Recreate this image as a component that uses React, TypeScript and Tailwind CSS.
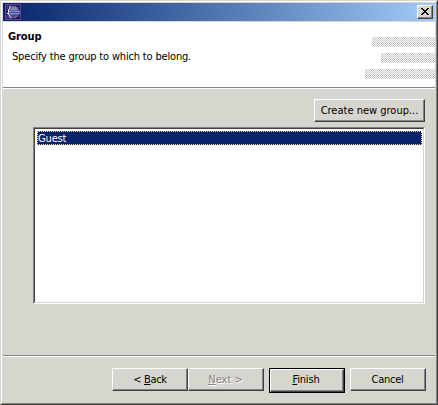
import type { ReactNode } from "react";

const raised =
  "border border-t-white border-l-white border-r-[#404040] border-b-[#404040] shadow-[inset_-1px_-1px_0_#848284]";

function Button({ children, className = "" }: { children: ReactNode; className?: string }) {
  return (
    <button
      type="button"
      className={`flex h-[23px] shrink-0 items-center justify-center whitespace-nowrap bg-[#d6d6ce] ${raised} ${className}`}
    >
      {children}
    </button>
  );
}

function Rule() {
  return <div className="h-[2px] shrink-0 border-t border-b border-t-[#848284] border-b-white" />;
}

const dither =
  "h-[10px] bg-[repeating-conic-gradient(#c6c3c6_0_25%,#ffffff_0_50%)] bg-[length:2px_2px]";

function EclipseIcon() {
  return (
    <svg width="16" height="16" viewBox="0 0 16 16" shapeRendering="crispEdges">
      <rect width="16" height="16" fill="#5c4798" />
      <rect x="1" y="1" width="14" height="14" fill="#2a1a58" />
      <path d="M1 1h4v2H3v3H1zM1 11h3v2h3v2H1z" fill="#472f80" />
      <path d="M6 2h5v1h2v2h1v6h-1v2h-2v1H6v-1H5v-2H4V5h1V3h1z" fill="#67659a" />
      <path d="M7 3h4v1h1v2H6V4h1z" fill="#8583a8" />
      <path d="M6 11h6v1h-2v1H7v-1H6z" fill="#47417c" />
      <path d="M5 2h1v1H5v2H4v2H3V5h1V3h1zM3 9h1v2h1v2h1v1H5v-1H4v-2H3z" fill="#d5d2f2" />
      <path d="M2 9h1v1H2zM3 7h1v2H3z" fill="#ffffff" />
      <path d="M4 7h11v1H4zM4 9h11v1H4z" fill="#7590e2" />
      <path d="M4 8h11v1H4z" fill="#4b4398" />
    </svg>
  );
}

export default function App() {
  return (
    <div className="h-[405px] w-[438px] overflow-hidden border border-t-[#d6d6ce] border-l-[#d6d6ce] border-r-[#404040] border-b-[#404040] bg-[#d6d6ce] font-['DejaVu_Sans_Condensed','DejaVu_Sans',sans-serif] text-[11px] leading-[13px] text-black [font-stretch:condensed]">
      <div className="flex h-full flex-col border border-t-white border-l-white border-r-[#848284] border-b-[#848284] px-px pt-px">
        <header className="flex h-[18px] shrink-0 items-center justify-between bg-linear-to-r from-[#08246b] to-[#a5cbf7] pr-[2px] pl-[2px]">
          <EclipseIcon />
          <button type="button" aria-label="Close" className={`flex h-[14px] w-4 items-center justify-center bg-[#d6d6ce] ${raised}`}>
            <svg width="8" height="7" viewBox="0 0 8 7" shapeRendering="crispEdges" className="mr-px mb-px">
              <path
                d="M0 0h2v1H0zM6 0h2v1H6zM1 1h2v1H1zM5 1h2v1H5zM2 2h4v1H2zM3 3h2v1H3zM2 4h4v1H2zM1 5h2v1H1zM5 5h2v1H5zM0 6h2v1H0zM6 6h2v1H6z"
                fill="#000"
              />
            </svg>
          </button>
        </header>
        <section className="mt-px flex h-[65px] shrink-0 justify-between bg-white">
          <div className="pt-[8px] pl-[5px]">
            <h1 className="font-bold tracking-[-0.1px]">Group</h1>
            <p className="mt-[7px] pl-[4px] tracking-[-0.17px]">Specify the group to which to belong.</p>
          </div>
          <div className="flex flex-col items-end gap-[6px] pt-[15px]">
            <div className={`w-[63px] ${dither}`} />
            <div className={`w-[54px] ${dither}`} />
            <div className={`w-[70px] ${dither}`} />
          </div>
        </section>
        <Rule />
        <main className="flex h-[266px] shrink-0 flex-col pt-[10px] pr-[10px] pl-[30px]">
          <Button className="w-[111px] self-end">Create new group...</Button>
          <div className="mt-[5px] h-[177px] border border-t-[#848284] border-l-[#848284] border-r-white border-b-white">
            <div className="h-full border border-t-[#404040] border-l-[#404040] border-r-[#d6d6ce] border-b-[#d6d6ce] bg-white pt-[2px] pr-px pl-[2px]">
              <div className="h-[14px] border border-dotted border-[#f7db94] bg-[#08246b] leading-[14px] tracking-[-0.15px] text-white">
                Guest
              </div>
            </div>
          </div>
        </main>
        <Rule />
        <footer className="flex items-start justify-end pt-[11px] pr-[9px]">
          <Button className="w-[76px] pb-px tracking-[-0.35px]">
            <span>&lt; <u>B</u>ack</span>
          </Button>
          <Button className="w-[76px] pr-px pb-px text-[#848284] [text-shadow:1px_1px_0_#fff]">
            <span><u>N</u>ext &gt;</span>
          </Button>
          <div className="mr-[5px] ml-[5px] border border-black">
            <Button className="h-[21px] w-[74px] pr-[2px] pb-[2px] tracking-[-0.15px]">
              <span><u>F</u>inish</span>
            </Button>
          </div>
          <Button className="w-[76px] pr-px pb-px tracking-[-0.25px]">Cancel</Button>
        </footer>
      </div>
    </div>
  );
}
